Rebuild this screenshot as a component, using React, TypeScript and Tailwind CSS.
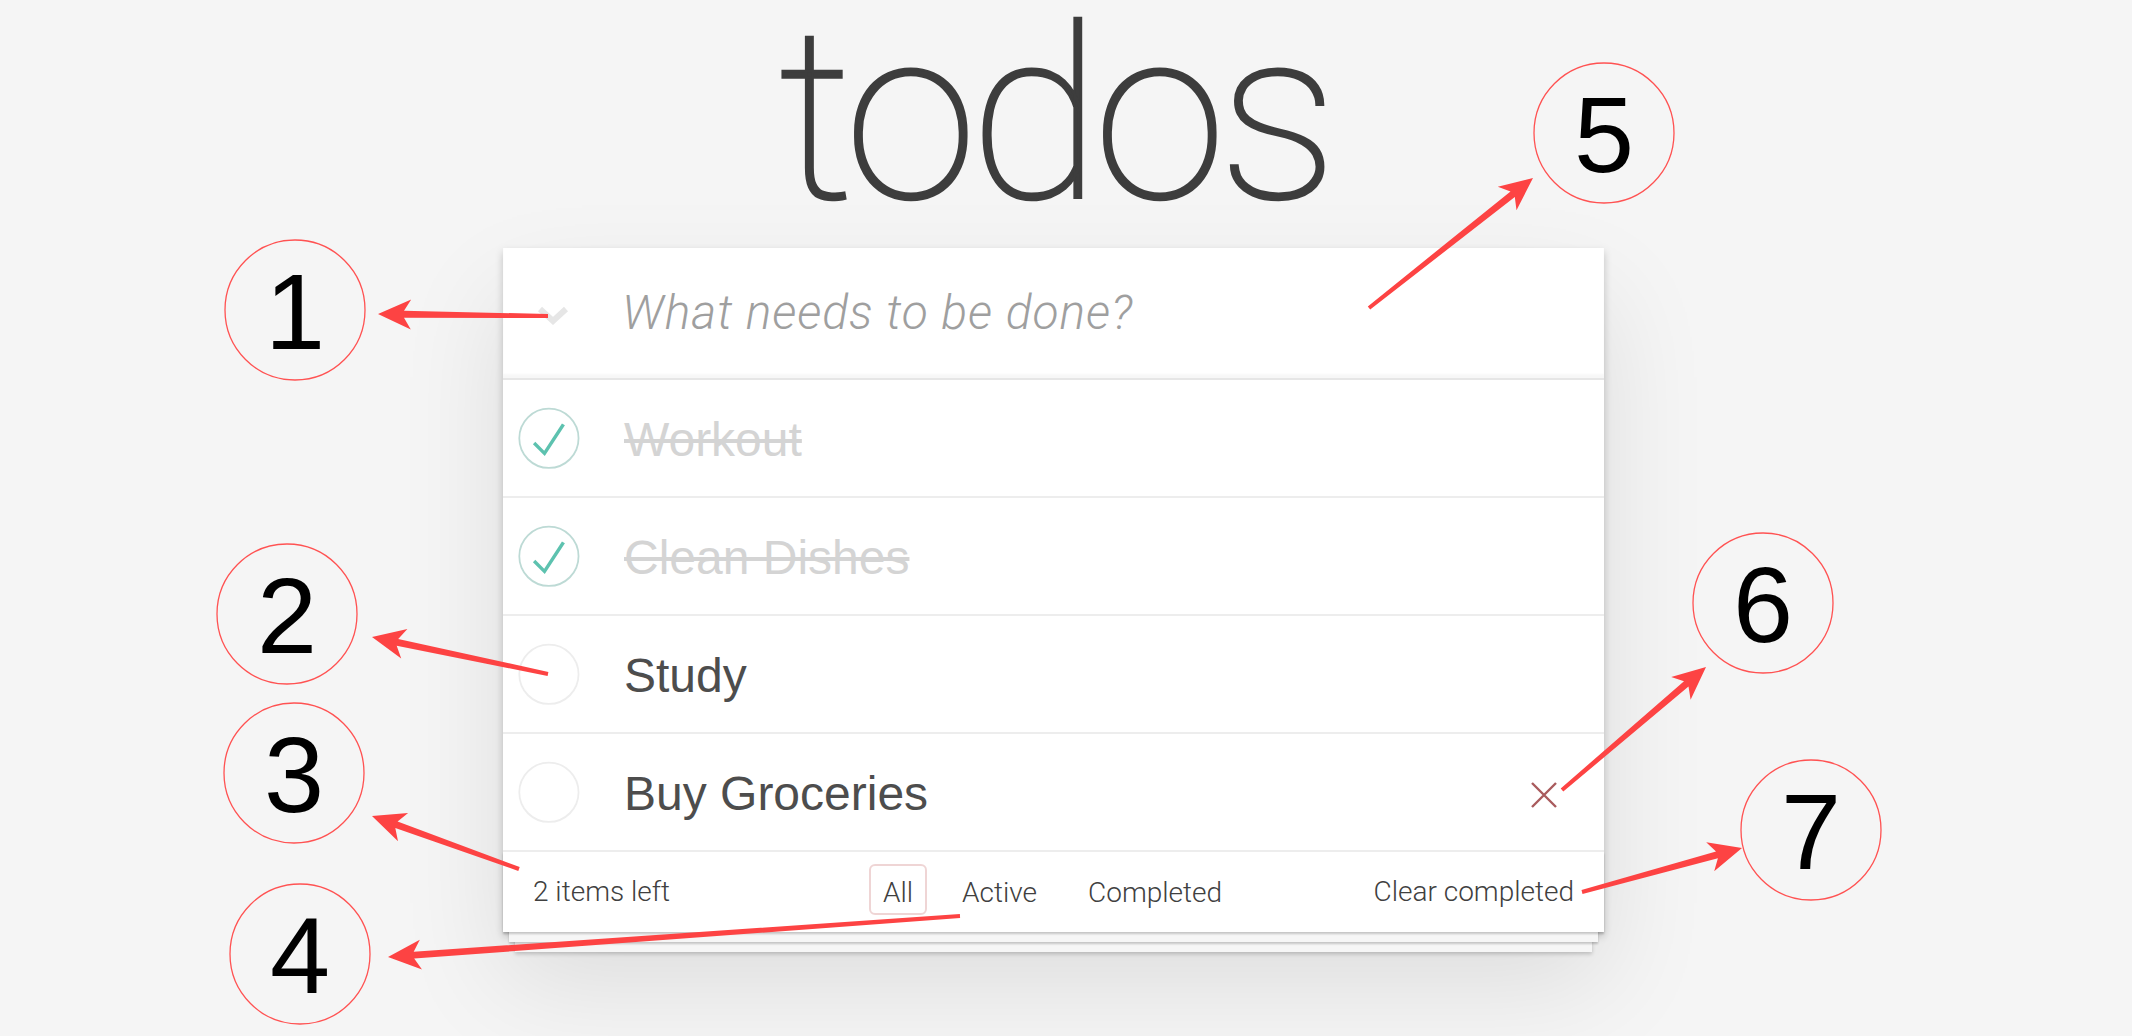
import React from "react";

type Todo = { id: number; title: string; done: boolean };

const todos: Todo[] = [
  { id: 1, title: "Workout", done: true },
  { id: 2, title: "Clean Dishes", done: true },
  { id: 3, title: "Study", done: false },
  { id: 4, title: "Buy Groceries", done: false },
];

// numbered callouts laid over the screenshot
const callouts = [
  { n: 1, cx: 295, cy: 310 },
  { n: 2, cx: 287, cy: 614 },
  { n: 3, cx: 294, cy: 773 },
  { n: 4, cx: 300, cy: 954 },
  { n: 5, cx: 1604, cy: 133 },
  { n: 6, cx: 1763, cy: 603 },
  { n: 7, cx: 1811, cy: 830 },
];

const arrows: [number, number, number, number][] = [
  [548, 316, 378, 314],
  [548, 674, 372, 637],
  [519, 869, 372, 816],
  [960, 916, 388, 957],
  [1369, 308, 1533, 178],
  [1562, 790, 1706, 667],
  [1582, 892, 1742, 848],
];

function arrowPoints(x1: number, y1: number, x2: number, y2: number) {
  const dx = x2 - x1;
  const dy = y2 - y1;
  const len = Math.hypot(dx, dy);
  const ux = dx / len;
  const uy = dy / len;
  const nx = -uy;
  const ny = ux;
  const head = 33;
  const half = 15;
  const notch = 26;
  const neck = 3.5;
  const tail = 2;
  const pts = [
    [x2, y2],
    [x2 - head * ux + half * nx, y2 - head * uy + half * ny],
    [x2 - notch * ux + neck * nx, y2 - notch * uy + neck * ny],
    [x1 + tail * nx, y1 + tail * ny],
    [x1 - tail * nx, y1 - tail * ny],
    [x2 - notch * ux - neck * nx, y2 - notch * uy - neck * ny],
    [x2 - head * ux - half * nx, y2 - head * uy - half * ny],
  ];
  return pts.map((p) => `${p[0].toFixed(1)},${p[1].toFixed(1)}`).join(" ");
}

function Toggle({ done }: { done: boolean }) {
  return (
    <svg width="80" height="80" viewBox="-10 -18 100 135" className="shrink-0">
      <circle cx="50" cy="50" r="50" fill="none" stroke={done ? "#bddad5" : "#ededed"} strokeWidth="3" />
      {done && <path fill="#5dc2af" d="M72 25L42 71 27 56l-4 4 20 20 34-52z" />}
    </svg>
  );
}

function Annotations() {
  return (
    <svg className="pointer-events-none absolute left-0 top-0" width="2132" height="1036" viewBox="0 0 2132 1036">
      {callouts.map((c) => (
        <g key={c.n}>
          <circle cx={c.cx} cy={c.cy} r="70" fill="none" stroke="#ff5252" strokeWidth="1.3" />
          <text
            x={c.cx}
            y={c.cy + 39}
            textAnchor="middle"
            fontSize="108"
            fill="#000"
            fontFamily="'Liberation Sans', Arial, sans-serif"
          >
            {c.n}
          </text>
        </g>
      ))}
      {arrows.map((a, i) => (
        <polygon key={i} points={arrowPoints(a[0], a[1], a[2], a[3])} fill="#fd4343" />
      ))}
    </svg>
  );
}

export default function App() {
  return (
    <div className="relative h-[1036px] w-full overflow-hidden bg-[#f5f5f5] font-['Liberation_Sans',Arial,sans-serif]">
      <div className="ml-[503px] w-[1101px]">
        <h1 className="pl-[2px] text-center font-['Roboto',sans-serif] text-[240px] font-thin leading-[232px] tracking-[-0.03em] text-[#3d3d3d] [-webkit-text-stroke:2.5px_#3d3d3d]">
          todos
        </h1>

        <section className="mt-[16px] bg-white shadow-[0_4px_8px_0_rgba(0,0,0,0.2),0_50px_100px_0_rgba(0,0,0,0.1)]">
          <header className="flex h-[132px] items-center border-b-2 border-[#e6e6e6] shadow-[inset_0_-4px_2px_rgba(0,0,0,0.03)]">
            <div className="mt-[5px] flex w-[100px] justify-center">
              <svg width="34" height="22" viewBox="0 0 34 22">
                <polyline points="4,4 17,16 30,4" fill="none" stroke="#e6e6e6" strokeWidth="6" />
              </svg>
            </div>
            <input
              className="ml-[19px] flex-1 bg-transparent font-['Roboto',sans-serif] text-[48px] font-light italic tracking-[0.02em] text-[#4d4d4d] outline-none placeholder:text-[#9f9f9f]"
              placeholder="What needs to be done?"
            />
          </header>

          <ul>
            {todos.map((t) => (
              <li key={t.id} className="flex h-[118px] items-center border-b-2 border-[#ededed]">
                <Toggle done={t.done} />
                <label
                  className={`mt-[3px] flex-1 pl-[41px] text-[48px] leading-[1.2] ${
                    t.done ? "text-[#d4d4d4] line-through decoration-[#d4d4d4]" : "text-[#4d4d4d]"
                  }`}
                >
                  {t.title}
                </label>
                {t.id === 4 && (
                  <div className="mr-[20px] mt-[6px] flex w-[80px] justify-center">
                    <svg width="28" height="28" viewBox="0 0 28 28">
                      <path d="M2 2L26 26M26 2L2 26" stroke="#a95b5d" strokeWidth="2.4" />
                    </svg>
                  </div>
                )}
              </li>
            ))}
          </ul>

          <footer className="grid h-[80px] grid-cols-[1fr_auto_1fr] items-center px-[30px] font-['Roboto',sans-serif] text-[28px] font-light text-[#404040] shadow-[0_2px_2px_rgba(0,0,0,0.2),0_16px_0_-6px_#f6f6f6,0_18px_2px_-6px_rgba(0,0,0,0.2),0_32px_0_-12px_#f6f6f6,0_34px_4px_-12px_rgba(0,0,0,0.2)]">
            <span>2 items left</span>
            <ul className="mt-[-5px] flex gap-[19px]">
              <li className="rounded-[6px] border-2 border-[rgba(175,47,47,0.2)] px-[12px] pb-[3px] pt-[9px] leading-[35px]">All</li>
              <li className="rounded-[6px] border-2 border-transparent px-[14px] pb-[3px] pt-[9px] leading-[35px]">Active</li>
              <li className="rounded-[6px] border-2 border-transparent px-[14px] pb-[3px] pt-[9px] leading-[35px]">Completed</li>
            </ul>
            <span className="justify-self-end">Clear completed</span>
          </footer>
        </section>
      </div>

      <Annotations />
    </div>
  );
}
